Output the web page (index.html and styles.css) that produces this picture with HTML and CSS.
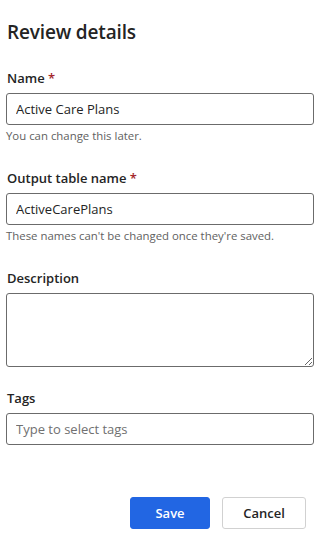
FILE: index.html
```html
<!DOCTYPE html>
<html lang="en">
<head>
<meta charset="utf-8">
<title>Review details</title>
<link rel="stylesheet" href="styles.css">
</head>
<body>
<div class="panel">
  <h1 class="title">Review details</h1>

  <div class="field">
    <label class="label" for="name">Name <span class="req">*</span></label>
    <input class="input" id="name" type="text" value="Active Care Plans">
    <div class="help">You can change this later.</div>
  </div>

  <div class="field">
    <label class="label" for="table">Output table name <span class="req">*</span></label>
    <input class="input" id="table" type="text" value="ActiveCarePlans">
    <div class="help">These names can't be changed once they're saved.</div>
  </div>

  <div class="field">
    <label class="label" for="desc">Description</label>
    <textarea class="textarea" id="desc"></textarea>
  </div>

  <div class="field">
    <label class="label" for="tags">Tags</label>
    <input class="input" id="tags" type="text" placeholder="Type to select tags">
  </div>

  <div class="actions">
    <button class="btn btn-primary" type="button">Save</button>
    <button class="btn btn-secondary" type="button">Cancel</button>
  </div>
</div>
</body>
</html>
```

FILE: styles.css
```css
* { box-sizing: border-box; }

html, body {
  margin: 0;
  padding: 0;
  background: #ffffff;
}

body {
  font-family: "Segoe UI", "Open Sans", "Noto Sans", sans-serif;
  color: #242424;
}

.panel {
  width: 326px;
  padding: 18px 12px 0 6px;
  display: flex;
  flex-direction: column;
}

.title {
  margin: 0 0 22px 1px;
  font-size: 19px;
  line-height: 28px;
  font-weight: 600;
  letter-spacing: -0.15px;
}

.field {
  display: flex;
  flex-direction: column;
  margin-bottom: 21px;
}

.label {
  font-size: 13px;
  line-height: 20px;
  font-weight: 600;
  margin: 0 0 5px 1px;
}

.req {
  color: #a4262c;
}

.input {
  height: 32px;
  width: 100%;
  border: 1px solid #6b6b6b;
  border-radius: 3px;
  padding: 0 9px;
  font-family: inherit;
  font-size: 13px;
  color: #242424;
  background: #fff;
  outline: none;
}

.input::placeholder {
  color: #707070;
}

.textarea {
  height: 74px;
  width: 100%;
  border: 1px solid #6b6b6b;
  border-radius: 3px;
  padding: 6px 9px;
  font-family: inherit;
  font-size: 13px;
  resize: vertical;
  outline: none;
}

.help {
  font-size: 11.4px;
  line-height: 16px;
  color: #616161;
  margin: 3px 0 3px 0;
}

.actions {
  display: flex;
  justify-content: flex-end;
  gap: 12px;
  margin-top: 31px;
  padding-right: 8px;
}

.btn {
  height: 32px;
  border-radius: 3px;
  font-family: inherit;
  font-size: 13px;
  font-weight: 600;
  cursor: pointer;
}

.btn-primary {
  width: 80px;
  background: #2266e3;
  border: 1px solid #2266e3;
  color: #ffffff;
}

.btn-secondary {
  width: 84px;
  background: #ffffff;
  border: 1px solid #d1d1d1;
  color: #242424;
}
```
